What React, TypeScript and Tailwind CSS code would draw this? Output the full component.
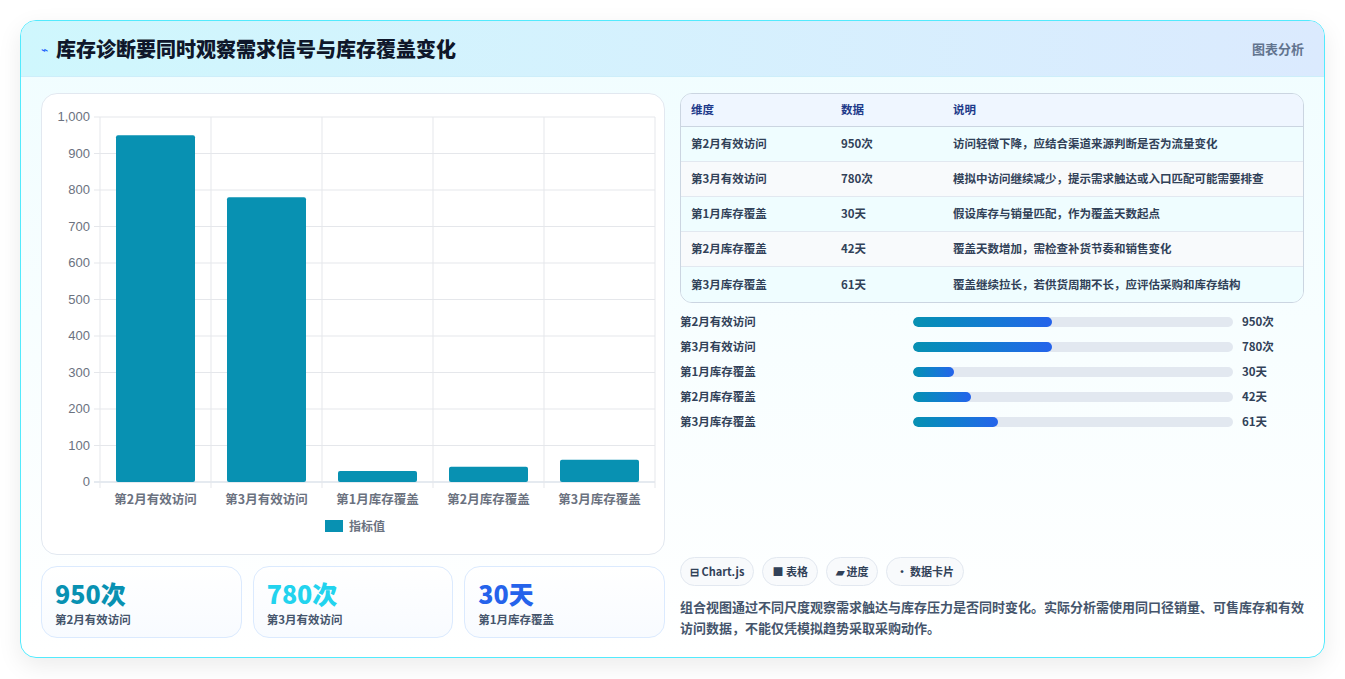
const font = { fontFamily: '"Noto Sans CJK SC", "Noto Sans", sans-serif' };

const bars = [
  { label: "第2月有效访问", value: 950 },
  { label: "第3月有效访问", value: 780 },
  { label: "第1月库存覆盖", value: 30 },
  { label: "第2月库存覆盖", value: 42 },
  { label: "第3月库存覆盖", value: 61 },
];

const rows = [
  ["第2月有效访问", "950次", "访问轻微下降，应结合渠道来源判断是否为流量变化"],
  ["第3月有效访问", "780次", "模拟中访问继续减少，提示需求触达或入口匹配可能需要排查"],
  ["第1月库存覆盖", "30天", "假设库存与销量匹配，作为覆盖天数起点"],
  ["第2月库存覆盖", "42天", "覆盖天数增加，需检查补货节奏和销售变化"],
  ["第3月库存覆盖", "61天", "覆盖继续拉长，若供货周期不长，应评估采购和库存结构"],
];

const progress = [
  { label: "第2月有效访问", value: "950次", pct: 43.5 },
  { label: "第3月有效访问", value: "780次", pct: 43.5 },
  { label: "第1月库存覆盖", value: "30天", pct: 12.8 },
  { label: "第2月库存覆盖", value: "42天", pct: 18 },
  { label: "第3月库存覆盖", value: "61天", pct: 26.5 },
];

function BarChart() {
  const L = 58, R = 613, T = 23, B = 388;
  const cw = (R - L) / 5;
  const h = B - T;
  return (
    <svg width="625" height="460" viewBox="0 0 625 460" className="block">
      {Array.from({ length: 11 }).map((_, i) => {
        const y = B - (h * i) / 10;
        return (
          <g key={i}>
            <line x1={L - 6} x2={R} y1={y} y2={y} stroke={i === 0 ? "#cbd5e1" : "#e5e7eb"} />
            <text x={L - 10} y={y + 4} textAnchor="end" fontSize="13" fill="#6b7280" fontFamily="Liberation Sans, sans-serif">
              {(i * 100).toLocaleString("en-US")}
            </text>
          </g>
        );
      })}
      {Array.from({ length: 6 }).map((_, i) => (
        <line key={i} x1={L + cw * i} x2={L + cw * i} y1={T} y2={B + 6} stroke="#e5e7eb" />
      ))}
      {bars.map((b, i) => {
        const bh = (b.value / 1000) * h;
        return (
          <g key={b.label}>
            <rect x={L + cw * i + 16} y={B - bh} width={79} height={bh} rx="2" fill="#0891b2" />
            <text x={L + cw * i + cw / 2} y={B + 22} textAnchor="middle" fontSize="12.5" fontWeight="600" fill="#6b7280" style={font}>
              {b.label}
            </text>
          </g>
        );
      })}
      <rect x="283" y="426" width="18" height="12" fill="#0891b2" />
      <text x="307" y="437" fontSize="12" fontWeight="600" fill="#6b7280" style={font}>指标值</text>
    </svg>
  );
}

export default function App() {
  return (
    <div className="min-h-screen bg-white p-5" style={font}>
      <div className="rounded-2xl border border-cyan-300 shadow-[0_8px_24px_rgba(0,0,0,0.08)] overflow-hidden bg-gradient-to-b from-[#f0fdff] to-white h-[638px]">
        <div className="h-[56px] flex items-center justify-between px-5 bg-gradient-to-r from-[#cff7fd] to-[#dbeafe] border-b border-[#cdeefa]">
          <div className="flex items-center gap-2">
            <span className="text-blue-600 text-xs">⌁</span>
            <h1 className="text-[20px] font-extrabold text-[#0f172a]">库存诊断要同时观察需求信号与库存覆盖变化</h1>
          </div>
          <span className="text-[13px] font-semibold text-slate-500">图表分析</span>
        </div>
        <div className="grid grid-cols-2 gap-[15px] px-5 pt-4">
          <div className="flex flex-col gap-[11px]">
            <div className="h-[462px] rounded-2xl border border-[#e2e8f0] bg-white overflow-hidden">
              <BarChart />
            </div>
            <div className="grid grid-cols-3 gap-[11px]">
              {[
                ["950次", "第2月有效访问", "text-[#0891b2]"],
                ["780次", "第3月有效访问", "text-[#22d3ee]"],
                ["30天", "第1月库存覆盖", "text-[#2563eb]"],
              ].map(([v, l, c]) => (
                <div key={l} className="h-[72px] rounded-2xl border border-[#dbeafe] bg-gradient-to-b from-white to-[#f8fbff] px-[13px] pt-[10px]">
                  <div className={`text-[25px] font-extrabold leading-[32px] ${c}`}>{v}</div>
                  <div className="text-[11.5px] font-semibold text-slate-600 mt-[2px]">{l}</div>
                </div>
              ))}
            </div>
          </div>
          <div className="flex flex-col">
            <div className="rounded-xl border border-[#cbd5e1] overflow-hidden text-[11.5px]">
              <div className="grid grid-cols-[150px_112px_1fr] h-[33px] items-center bg-[#eff6ff] border-b border-[#cbd5e1] px-[10px] font-semibold text-[#1e3a8a]">
                <span>维度</span><span>数据</span><span>说明</span>
              </div>
              {rows.map((r, i) => (
                <div key={r[0]} className={`grid grid-cols-[150px_112px_1fr] h-[35px] items-center px-[10px] font-semibold text-slate-700 ${i % 2 === 0 ? "bg-[#effdff]" : "bg-[#f8fafc]"} ${i < 4 ? "border-b border-[#e2e8f0]" : ""}`}>
                  <span>{r[0]}</span><span>{r[1]}</span><span>{r[2]}</span>
                </div>
              ))}
            </div>
            <div className="flex flex-col gap-[8px] mt-[10px]">
              {progress.map((p) => (
                <div key={p.label} className="flex items-center h-[17px] text-[11.5px] font-bold text-slate-700">
                  <span className="w-[233px]">{p.label}</span>
                  <div className="w-[320px] h-[10px] rounded-full bg-[#e2e8f0] overflow-hidden">
                    <div className="h-full rounded-full bg-gradient-to-r from-[#0891b2] to-[#2563eb]" style={{ width: `${p.pct}%` }} />
                  </div>
                  <span className="ml-[9px]">{p.value}</span>
                </div>
              ))}
            </div>
            <div className="flex-1" />
            <div className="flex gap-[8px]">
              {["⊟ Chart.js", "■ 表格", "▰ 进度", "• 数据卡片"].map((c) => (
                <span key={c} className="h-[29px] px-[9px] flex items-center rounded-full border border-[#e2e8f0] bg-[#f8fafc] text-[11px] font-bold text-slate-700">{c}</span>
              ))}
            </div>
            <p className="mt-[10px] text-[13px] leading-[21px] font-semibold text-slate-600">
              组合视图通过不同尺度观察需求触达与库存压力是否同时变化。实际分析需使用同口径销量、可售库存和有效访问数据，不能仅凭模拟趋势采取采购动作。
            </p>
          </div>
        </div>
      </div>
    </div>
  );
}
